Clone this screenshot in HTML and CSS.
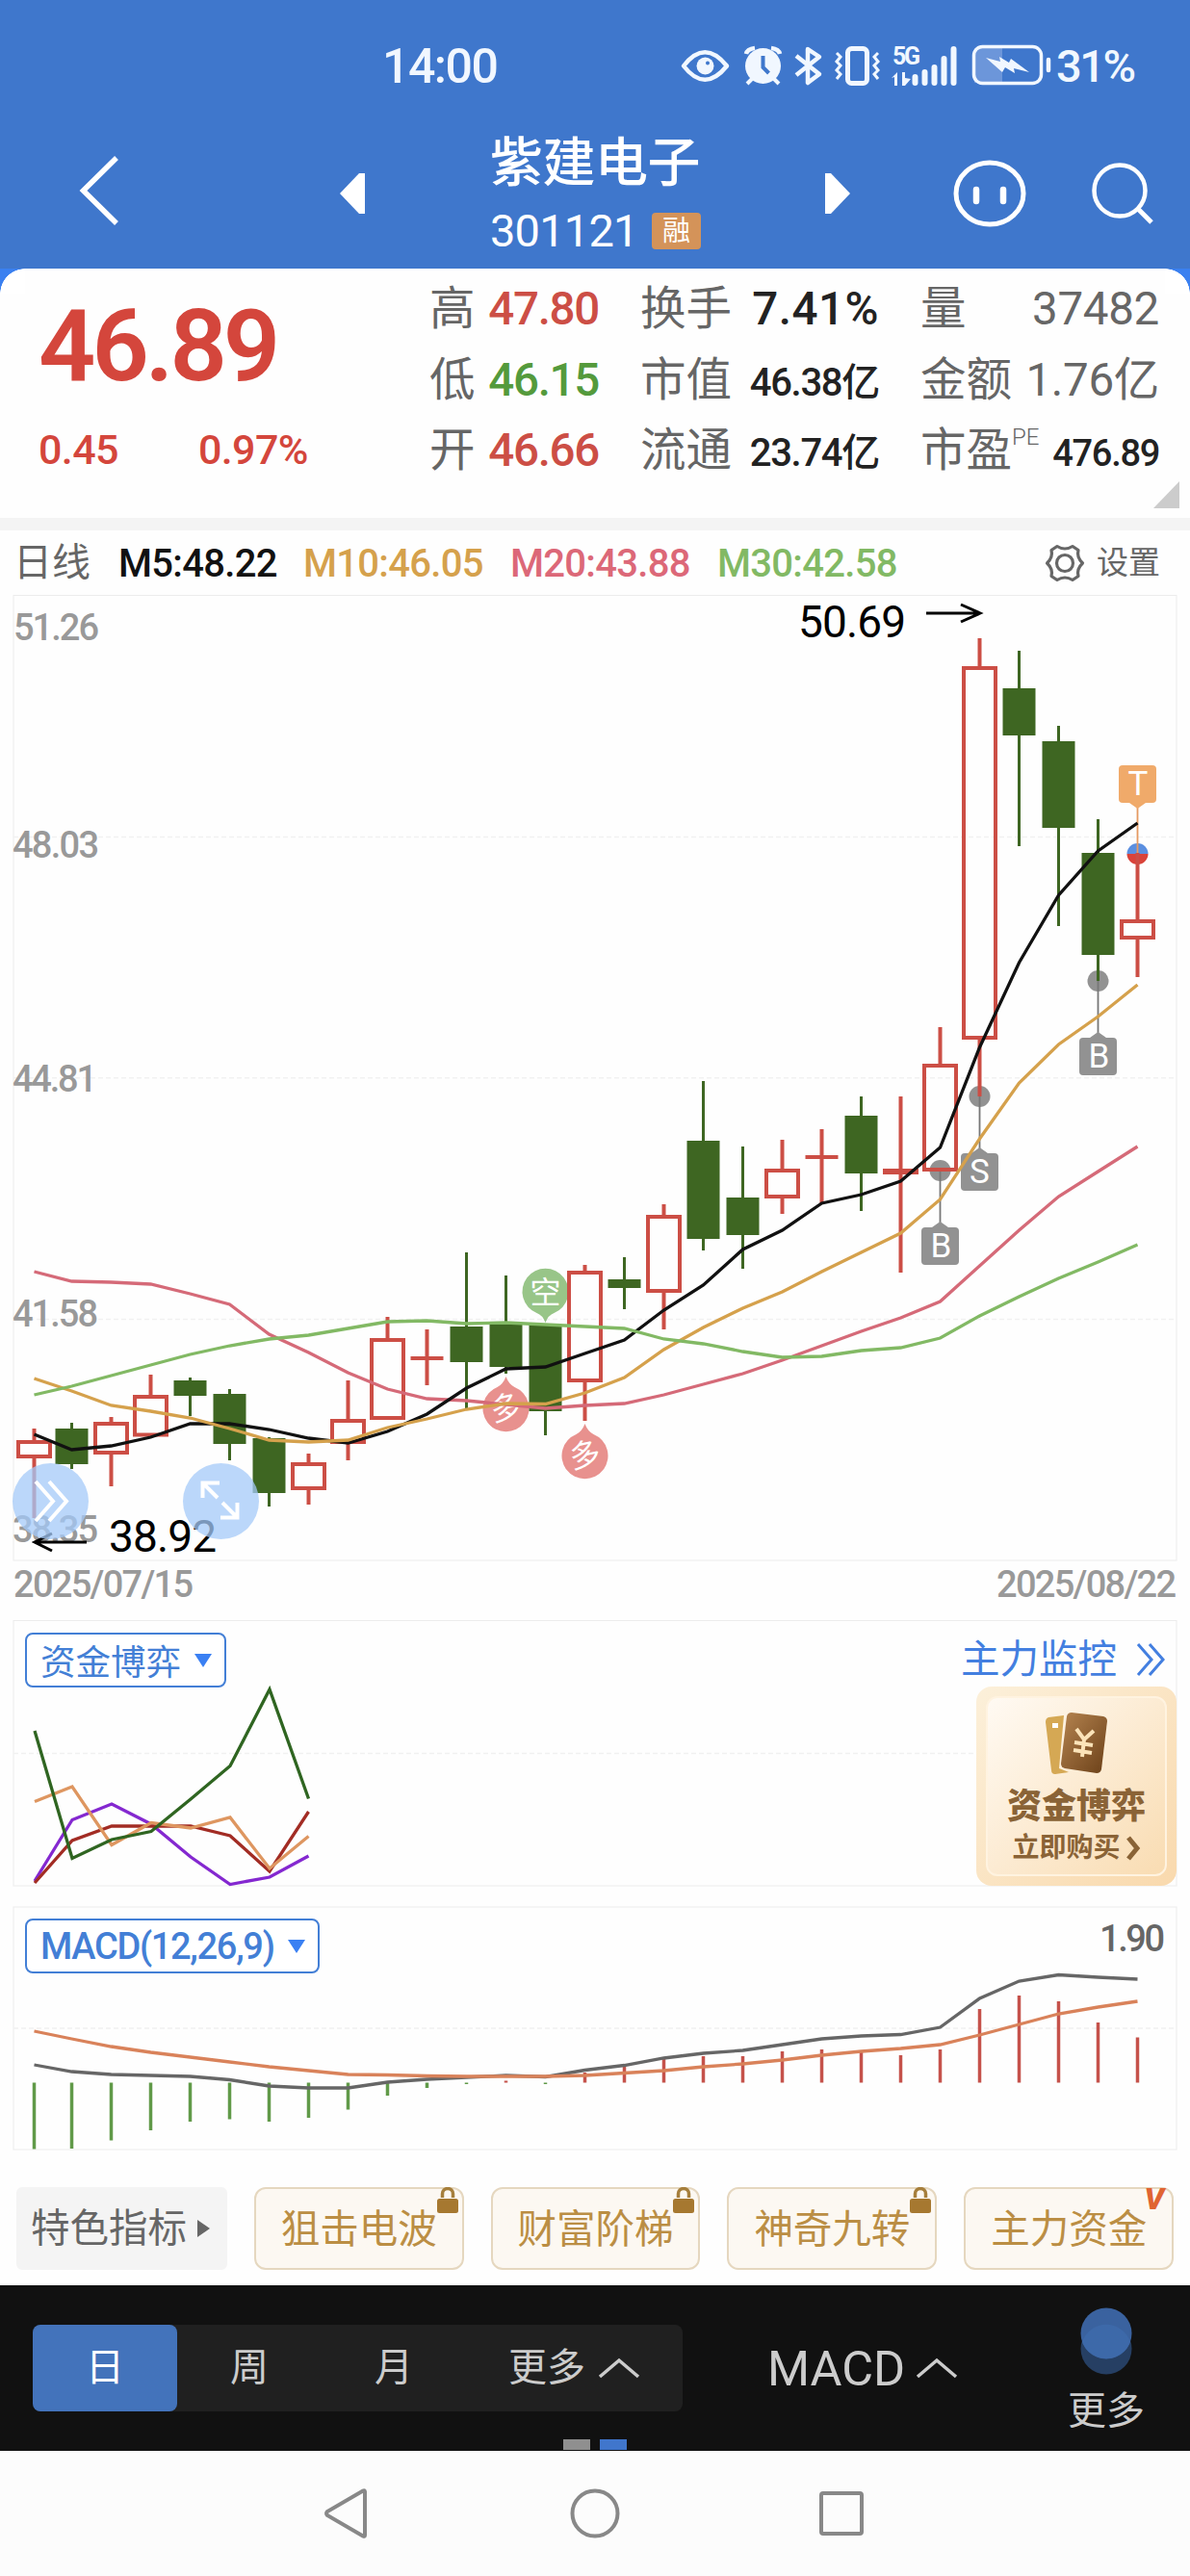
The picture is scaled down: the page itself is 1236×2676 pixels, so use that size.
FILE: index.html
```
<!DOCTYPE html>
<html lang="zh-CN">
<head>
    <meta charset="UTF-8">
    <meta name="viewport" content="width=device-width, initial-scale=1.0">
    <title>紫建电子 301121</title>
    <link rel="stylesheet" href="styles.css">
</head>
<body>
    <header class="header">
        <div class="status-bar">
            <span class="time">14:00</span>
            <svg class="status-icons" width="390" height="50" viewBox="702 42 390 50">
                <!-- глаз -->
                <path d="M710 68.500Q732 40 755 68.500Q732 97 710 68.500Z" fill="none" stroke="#f1f7ff" stroke-width="4.500" stroke-linejoin="round"/>
                <circle cx="732.500" cy="68.500" r="9" fill="#f1f7ff"/>
                <circle cx="735" cy="65.500" r="2" fill="#3f77cc"/>
                <!-- будильник -->
                <circle cx="792.500" cy="68.500" r="18.500" fill="#f1f7ff"/>
                <path d="M775 56Q776 51 784 50M810 56Q809 51 801 50" fill="none" stroke="#f1f7ff" stroke-width="4.500"/>
                <path d="M781 82l-5 5M804 82l5 5" stroke="#f1f7ff" stroke-width="4"/>
                <path d="M792.500 58v12l6 6" fill="none" stroke="#3f77cc" stroke-width="4"/>
                <!-- bluetooth -->
                <path d="M827 58l24 19-12 9V51l12 8-24 19" fill="none" stroke="#f1f7ff" stroke-width="4.500" stroke-linejoin="round"/>
                <!-- вибрация -->
                <rect x="880.500" y="50.500" width="20" height="36" rx="4" fill="none" stroke="#f1f7ff" stroke-width="5"/>
                <path d="M869 55l4 4-4 5 4 4-4 5 4 4-4 5M912 55l-4 4 4 5-4 4 4 5-4 4 4 5" fill="none" stroke="#f1f7ff" stroke-width="3"/>
                <!-- сеть -->
                <text x="927" y="67" class="net" textLength="29">5G</text>
                <path d="M926 81l6-6v14h-3v-9zM937 75h3v6l6 1-6 7h-3z" fill="#f1f7ff"/>
                <path d="M950.500 80v6M960.500 75v11M970.500 70v16M980.500 61v25M990.500 51v35" stroke="#f1f7ff" stroke-width="6" stroke-linecap="round"/>
                <!-- батарея -->
                <rect x="1012" y="50" width="29" height="36" fill="#6c96da"/>
                <rect x="1011.500" y="48.500" width="70" height="38" rx="9" fill="none" stroke="#f1f7ff" stroke-width="3.500"/>
                <path d="M1024 60l15 4-1-5 10 6 2-4 19 14-16-4 1 5-10-6-3 5z" fill="#f1f7ff"/>
                <path d="M1089 62v11" stroke="#f1f7ff" stroke-width="4.500" stroke-linecap="round"/>
            </svg>
            <span class="percent">31%</span>
        </div>
        <div class="nav">
            <svg class="back" width="46" height="76" viewBox="80 160 46 76"><path d="M121 164L86.500 198l34.500 34" fill="none" stroke="#fff" stroke-width="5.500"/></svg>
            <svg class="prev" width="26" height="42" viewBox="0 0 26 42"><path d="M26 0v42h-6L0 21 20 0z" fill="#fff"/></svg>
            <div class="stock">
                <div class="stock-name">紫建电子</div>
                <div class="stock-code"><span>301121</span><b class="margin-tag">融</b></div>
            </div>
            <svg class="next" width="26" height="42" viewBox="0 0 26 42"><path d="M0 0v42h6L26 21 6 0z" fill="#fff"/></svg>
            <svg class="robot" width="76" height="70" viewBox="0 0 76 70">
                <ellipse cx="38" cy="35" rx="35" ry="32" fill="none" stroke="#fff" stroke-width="5"/>
                <path d="M24 31v12M52 31v12" stroke="#fff" stroke-width="6.500" stroke-linecap="round"/>
            </svg>
            <svg class="search" width="66" height="66" viewBox="1134 168 66 66">
                <circle cx="1164" cy="198" r="26.500" fill="none" stroke="#fff" stroke-width="4.500"/>
                <path d="M1183 217l14 14" stroke="#fff" stroke-width="5"/>
            </svg>
        </div>
    </header>

    <section class="quote">
        <div class="price-block">
            <div class="price">46.89</div>
            <div class="change"><span>0.45</span><span>0.97%</span></div>
        </div>
        <div class="quote-grid">
            <div class="cell"><span>高</span><b class="red">47.80</b></div>
            <div class="cell"><span>换手</span><b class="wide">7.41%</b></div>
            <div class="cell"><span>量</span><b class="gray">37482</b></div>
            <div class="cell"><span>低</span><b class="green">46.15</b></div>
            <div class="cell"><span>市值</span><b class="small">46.38亿</b></div>
            <div class="cell"><span>金额</span><b class="gray">1.76亿</b></div>
            <div class="cell"><span>开</span><b class="red">46.66</b></div>
            <div class="cell"><span>流通</span><b class="small">23.74亿</b></div>
            <div class="cell"><span>市盈<sup>PE</sup></span><b class="smaller">476.89</b></div>
        </div>
        <div class="corner"></div>
    </section>

    <section class="ma-row">
        <span class="period">日线</span>
        <span class="ma ma5">M5:48.22</span>
        <span class="ma ma10">M10:46.05</span>
        <span class="ma ma20">M20:43.88</span>
        <span class="ma ma30">M30:42.58</span>
        <span class="settings">
            <svg width="42" height="42" viewBox="0 0 42 42" fill="none" stroke="#666" stroke-width="3.200" stroke-linejoin="round">
                <path d="M13 3.500Q21 8.500 29 3.500L35 7.500Q33 15 39.500 21Q33 27 35 34.500L29 38.500Q21 33.500 13 38.500L7 34.500Q9 27 2.500 21Q9 15 7 7.500Z"/>
                <circle cx="21" cy="21" r="8.500"/>
            </svg>
            设置
        </span>
    </section>

    <svg class="chart" width="1236" height="1053" viewBox="0 618 1236 1053">
        <rect class="frame" x="14" y="618.500" width="1208" height="1002.500"/>
        <path class="grid" d="M14 869.500H1222M14 1119.700H1222M14 1370.500H1222"/>

        <!-- сигналы 多 / 空 -->
        <g class="pin pin-long">
            <path d="M525.500 1430q3 8 9 11a24 24 0 1 1-18 0q6-3 9-11z"/>
            <text x="525.500" y="1474" transform="rotate(-12 525.500 1462)">多</text>
            <path d="M607.500 1479q3 8 9 11a24 24 0 1 1-18 0q6-3 9-11z"/>
            <text x="607.500" y="1523" transform="rotate(-12 607.500 1511)">多</text>
        </g>
        <g class="pin pin-short">
            <path d="M566.500 1374q-3-8-9-10a24 24 0 1 1 18 0q-6 2-9 10z"/>
            <text x="566.500" y="1354">空</text>
        </g>

        <!-- сделки B / S / T -->
        <g class="trade">
            <circle cx="1140.500" cy="1019" r="11"/>
            <circle cx="1017.500" cy="1139" r="11"/>
            <circle cx="976.500" cy="1216" r="11"/>
            <path class="stem" d="M1140.500 1019v56M1017.500 1139v56M976.500 1216v56"/>
            <path d="M1132 1078l8.500-6 8.500 6zM1009 1198l8.500-6 8.500 6zM968 1275l8.500-6 8.500 6z"/>
            <rect x="1121" y="1078" width="39" height="39" rx="4"/>
            <rect x="998" y="1198" width="39" height="39" rx="4"/>
            <rect x="957" y="1275" width="39" height="39" rx="4"/>
            <text x="1141.500" y="1109">B</text>
            <text x="1017.500" y="1229">S</text>
            <text x="977.500" y="1306">B</text>
        </g>
        <path d="M1170.500 887a11 11 0 0 1 22 0z" fill="#5b8fe0"/>
        <path d="M1170.500 887a11 11 0 0 0 22 0z" fill="#d9433a"/>

        <g id="candles"></g>

        <g class="trade trade-t">
            <path class="stem" d="M1181.500 836v50"/>
            <path d="M1173 834l8.500 6 8.500-6z"/>
            <rect x="1162" y="795" width="39" height="39" rx="4"/>
            <text x="1182" y="826">T</text>
        </g>

        <g id="averages"></g>

        <g class="axis">
            <text x="14" y="665" textLength="89">51.26</text>
            <text x="13" y="891" textLength="90">48.03</text>
            <text x="13" y="1134" textLength="88">44.81</text>
            <text x="13" y="1378" textLength="89">41.58</text>
            <text x="13" y="1602" textLength="89">38.35</text>
            <text x="14" y="1659" textLength="187">2025/07/15</text>
            <text x="1035" y="1659" textLength="187">2025/08/22</text>
        </g>
        <g class="extreme">
            <text x="829" y="662" textLength="112">50.69</text>
            <path d="M962 637h55M998 628l20 9-20 9"/>
            <text x="113" y="1611.500" textLength="112">38.92</text>
            <path d="M90 1602H36M54 1593l-18 9 18 9"/>
        </g>

        <g class="round-btn">
            <circle cx="52.500" cy="1559.500" r="39.500"/>
            <path d="M37 1539l18 20.500L37 1580M51 1539l18 20.500L51 1580"/>
            <circle cx="229.500" cy="1559.500" r="39.500"/>
            <path d="M228 1540.500h-17.500V1556M211 1541l15 15M229 1576.500h17.500V1561M246 1576l-15-15"/>
        </g>
    </svg>

    <section class="sub-chart">
        <svg class="chart" width="1236" height="300" viewBox="0 1671 1236 300">
            <rect class="frame" x="14" y="1683.500" width="1208" height="275.500"/>
            <path class="grid" d="M14 1821.500H1222"/>
            <g class="flow">
                <path stroke="#8428d0" d="M36 1954L75 1890.500 116 1874 157 1895 198 1929 239 1957.500 280 1950 320.500 1928"/>
                <path stroke="#a22c24" d="M36 1956L75 1912 116 1897H198L239 1907 280 1944 320.500 1882"/>
                <path stroke="#de9660" d="M36 1871.500L75 1856 116 1916.500 157 1893.500 198 1899 239 1888 280 1941 320.500 1907.500"/>
                <path stroke="#2f6521" d="M36 1798L75 1930.500 116 1911 157 1902.500 198 1869 239 1834.500 280 1755 320.500 1868.500"/>
            </g>
        </svg>
        <div class="indicator">资金博弈<i></i></div>
        <div class="monitor">
            主力监控
            <svg width="30" height="36" viewBox="0 0 30 36" fill="none" stroke="#437fe0" stroke-width="3"><path d="M2 2l14 16L2 34M14 2l14 16-14 16"/></svg>
        </div>
        <div class="buy-card">
            <svg width="66" height="66" viewBox="1085 1778 66 66">
                <defs>
                    <linearGradient id="brown" x1="0" y1="0" x2="1" y2="1">
                        <stop offset="0" stop-color="#b58450"/>
                        <stop offset="1" stop-color="#6b4018"/>
                    </linearGradient>
                </defs>
                <path d="M1089 1784l16-2-5 55 10 4-14 2q-4 0-4-4l-6-50q0-4 3-5z" fill="#d5a854"/>
                <rect x="1093" y="1790" width="6" height="5" fill="#fff"/>
                <path d="M1113 1779l33 4q4 1 4 5l-6 50q-1 4-5 4l-33-5q-4-1-4-5l6-49q1-4 5-4z" fill="url(#brown)"/>
                <path d="M1118 1796l8 11 10-9M1126 1807l-2 18M1116 1810l19 3M1115 1818l19 3" fill="none" stroke="#fbe3b9" stroke-width="4"/>
            </svg>
            <div class="buy-title">资金博弈</div>
            <div class="buy-link">立即购买<svg width="15" height="26" viewBox="0 0 15 26"><path d="M2 2l9 11-9 11" fill="none" stroke="#8a6336" stroke-width="5"/></svg></div>
        </div>
    </section>

    <section class="sub-chart">
        <svg class="chart" width="1236" height="279" viewBox="0 1971 1236 279">
            <rect class="frame" x="14" y="1981" width="1208" height="252"/>
            <path class="grid" d="M14 2107H1222"/>
            <g id="macd"></g>
            <text class="macd-max" x="1142" y="2027" textLength="68">1.90</text>
        </svg>
        <div class="indicator indicator-macd"><span>MACD(12,26,9)</span><i></i></div>
    </section>

    <section class="tags">
        <div class="tag tag-title">特色指标<i></i></div>
        <div class="tag">狙击电波<svg class="lock" width="22" height="27" viewBox="0 0 22 27"><path d="M5.500 11V7a5.500 5.500 0 0 1 11 0v4" fill="none" stroke="#a67f3c" stroke-width="3.500"/><rect y="12" width="22" height="15" rx="2.500" fill="#a67830"/></svg></div>
        <div class="tag">财富阶梯<svg class="lock" width="22" height="27" viewBox="0 0 22 27"><path d="M5.500 11V7a5.500 5.500 0 0 1 11 0v4" fill="none" stroke="#a67f3c" stroke-width="3.500"/><rect y="12" width="22" height="15" rx="2.500" fill="#a67830"/></svg></div>
        <div class="tag">神奇九转<svg class="lock" width="22" height="27" viewBox="0 0 22 27"><path d="M5.500 11V7a5.500 5.500 0 0 1 11 0v4" fill="none" stroke="#a67f3c" stroke-width="3.500"/><rect y="12" width="22" height="15" rx="2.500" fill="#a67830"/></svg></div>
        <div class="tag">主力资金<span class="vip">V</span></div>
    </section>

    <footer class="toolbar">
        <div class="periods">
            <span class="active">日</span>
            <span>周</span>
            <span>月</span>
            <span class="more">更多<svg width="44" height="24" viewBox="0 0 44 24"><path d="M2 21L22 4l20 17" fill="none" stroke="#ccc" stroke-width="3.500"/></svg></span>
        </div>
        <div class="macd-select">MACD<svg width="44" height="24" viewBox="0 0 44 24"><path d="M2 21L22 4l20 17" fill="none" stroke="#ccc" stroke-width="3.500"/></svg></div>
        <div class="extra">
            <svg width="54" height="70" viewBox="0 0 54 70">
                <circle cx="27" cy="43" r="26.500" fill="#263f63"/>
                <circle cx="27" cy="27" r="26.500" fill="#3a629f"/>
                <path d="M2 35.500A26.500 26.500 0 0 1 52 35.500A26.500 26.500 0 0 1 2 35.500z" fill="#3d69a9"/>
            </svg>
            更多
        </div>
        <div class="pages"><i></i><i class="on"></i></div>
    </footer>

    <div class="system-nav">
        <svg width="50" height="54" viewBox="0 0 50 54"><path d="M44 4.500v45q0 2-2 1L5 29q-2-2 0-4L42 3.500q2-1 2 1z"/></svg>
        <svg width="52" height="54" viewBox="0 0 52 54"><circle cx="26" cy="27" r="23.500"/></svg>
        <svg width="50" height="54" viewBox="0 0 50 54"><rect x="2" y="6" width="42" height="42" rx="2"/></svg>
    </div>

    <script>
        // high, верх тела, низ тела, low, тип (u - рост, d - падение, c - крест)
        const candles = [
            [1484, 1496, 1515, 1577, 'u'], [1478, 1484, 1521, 1526, 'd'], [1472, 1477, 1511, 1544, 'u'],
            [1428, 1449, 1492.5, 1492, 'u'], [1431, 1434, 1450, 1471, 'd'], [1443, 1448, 1500, 1517, 'd'],
            [1493, 1494, 1551, 1565, 'd'], [1510, 1519, 1548, 1563, 'u'], [1434, 1474, 1500, 1517, 'u'],
            [1368, 1390, 1475, 1475, 'u'], [1381, 1409, 1413, 1439, 'c'], [1301, 1378, 1415, 1463, 'd'],
            [1325, 1375, 1420, 1427, 'd'], [1375, 1376, 1466, 1491, 'd'], [1314, 1320, 1436, 1476, 'u'],
            [1306, 1329, 1338, 1360, 'd'], [1251, 1262, 1343, 1381, 'u'], [1123, 1185, 1287, 1299, 'd'],
            [1191, 1244, 1283, 1318, 'd'], [1184, 1214, 1245, 1261, 'u'], [1173, 1200, 1204, 1250, 'c'],
            [1139, 1159, 1219, 1258, 'd'], [1139, 1214, 1220, 1322, 'c'], [1067, 1105, 1217, 1217, 'u'],
            [663, 692, 1080, 1139, 'u'], [676, 715, 764, 879, 'd'], [754, 770, 860, 962, 'd'],
            [851, 886, 992, 1019, 'd'], [886, 955, 976, 1015, 'u']
        ];
        const averages = {
            '#d56a78': [1321, 1331, 1332, 1334, 1344, 1355, 1386, 1405, 1426, 1443, 1453, 1455, 1459, 1463, 1460, 1458, 1449, 1438, 1427, 1413, 1398, 1383, 1369, 1352, 1315, 1278, 1243, 1217, 1191],
            '#111111': [1490, 1506, 1502, 1493, 1479, 1479, 1485, 1494, 1499, 1487, 1469, 1442, 1422, 1420, 1406, 1392, 1361, 1335, 1298, 1278, 1250, 1241, 1227, 1192, 1088, 1000, 930, 884, 855],
            '#d5a14c': [1432, 1445, 1460, 1466, 1473, 1484, 1496, 1498, 1496, 1483, 1474, 1464, 1458, 1458.5, 1447, 1431, 1402, 1379, 1359, 1342, 1321, 1301, 1281, 1246, 1183, 1125, 1085, 1056, 1023],
            '#82b964': [1449, 1440, 1429, 1418, 1407, 1398, 1391, 1387, 1380, 1373, 1372, 1375, 1374, 1376, 1378, 1380, 1391, 1396, 1404, 1410, 1409, 1403, 1400, 1390, 1367, 1347, 1328, 1311, 1293]
        };
        const macdBars = [2232.5, 2232, 2223.5, 2213, 2204, 2201.5, 2204, 2200, 2191.5, 2177, 2169, 2165, 2161.5, 2165, 2153, 2147, 2139, 2136, 2136, 2131, 2129, 2132, 2135, 2129, 2087, 2073, 2079, 2101, 2116.5];
        const macdLines = {
            '#666666': [2145, 2152, 2155, 2156, 2157, 2160.5, 2167, 2169, 2169, 2163, 2160, 2158, 2156, 2157.5, 2150.5, 2145.5, 2138, 2133, 2130, 2124, 2118, 2115, 2113.5, 2106, 2076, 2058, 2051.5, 2054, 2056],
            '#d9825a': [2110, 2118, 2126, 2132, 2137, 2142, 2147, 2151, 2155, 2155.5, 2156.5, 2157, 2157, 2157, 2156, 2153.5, 2151, 2147, 2144, 2140, 2135, 2131, 2128, 2124, 2114, 2103, 2092, 2085, 2079]
        };

        function xAt(i) {
            return i === 0 ? 35.5 : 33.5 + i * 41;
        }

        function add(parent, name, attrs) {
            const el = document.createElementNS('http://www.w3.org/2000/svg', name);
            for (const key in attrs) {
                el.setAttribute(key, attrs[key]);
            }
            document.getElementById(parent).appendChild(el);
        }

        function drawLines(parent, lines) {
            for (const color in lines) {
                const points = lines[color].map((y, i) => xAt(i) + ',' + y).join(' ');
                add(parent, 'polyline', { points: points, fill: 'none', stroke: color, 'stroke-width': 3.3 });
            }
        }

        candles.forEach(([high, top, bottom, low, type], i) => {
            const x = xAt(i);
            if (type === 'u') {
                add('candles', 'path', { d: `M${x} ${high}V${top}M${x} ${bottom}V${Math.max(low, bottom)}`, stroke: '#cc4e45', 'stroke-width': 4 });
                add('candles', 'rect', { x: x - 16.5, y: top + 2, width: 33, height: bottom - top - 4, fill: 'none', stroke: '#cc4e45', 'stroke-width': 4 });
            } else {
                const color = type === 'd' ? '#3e6622' : '#cc4e45';
                const w = bottom - top === 6 ? 37 : 34;
                add('candles', 'path', { d: `M${x} ${high}V${low}`, stroke: color, 'stroke-width': type === 'd' ? 3 : 4 });
                add('candles', 'rect', { x: x - w / 2, y: top, width: w, height: bottom - top, fill: color });
            }
        });
        drawLines('averages', averages);

        macdBars.forEach((y, i) => {
            add('macd', 'path', { d: `M${xAt(i)} 2163.500V${y}`, stroke: y > 2163.5 ? '#619a49' : '#c5524b', 'stroke-width': 3.5 });
        });
        drawLines('macd', macdLines);
    </script>
</body>
</html>
```
FILE: styles.css
```
body {
    margin: 0;
    width: 1236px;
    background-color: #fefefe;
    font-family: Roboto, "Noto Sans CJK SC", sans-serif;
    color: #666;
}
svg {
    display: block;
    flex: none;
}
b {
    font-weight: 500;
}
.header {
    height: 279px;
    background-color: #3f77cc;
    color: #fff;
}
.status-bar {
    display: flex;
    align-items: center;
    height: 100px;
    padding-top: 37px;
    box-sizing: border-box;
    padding-left: 397px;
    color: #f1f7ff;
}
.time {
    width: 305px;
    font-size: 50px;
    line-height: 60px;
    font-weight: 500;
    letter-spacing: -1.5px;
    white-space: nowrap;
}
.status-icons {
    margin-top: -3px;
}
.net {
    font-size: 25px;
    font-weight: 700;
    fill: #f1f7ff;
}
.percent {
    margin-left: 5px;
    font-size: 47px;
    font-weight: 500;
    letter-spacing: -2.5px;
}
.nav {
    display: flex;
    height: 179px;
    padding-left: 80px;
}
.back {
    margin-top: 60px;
}
.prev {
    margin: 80px 0 0 227px;
}
.stock {
    width: 220px;
    margin: 39px 128px 0 130px;
}
.stock-name {
    font-size: 55px;
    font-weight: 500;
    line-height: 60px;
    letter-spacing: -0.5px;
    white-space: nowrap;
}
.stock-code {
    display: flex;
    justify-content: space-between;
    align-items: center;
    width: 219px;
    margin-top: 13px;
    font-size: 47px;
    line-height: 56px;
    letter-spacing: -0.8px;
}
.margin-tag {
    width: 51px;
    height: 38px;
    border-radius: 4px;
    background-color: #d49359;
    font-size: 29px;
    font-weight: 400;
    line-height: 38px;
    letter-spacing: 0;
    text-align: center;
}
.next {
    margin-top: 80px;
}
.robot {
    margin: 66px 0 0 107px;
}
.search {
    margin: 68px 0 0 67px;
}
.quote {
    position: relative;
    display: flex;
    height: 259px;
    border-bottom: 13px solid #f4f4f4;
    background: radial-gradient(circle at 26px 26px, #fff 25.500px, #3a80f0 26px) 0 0 / 26px 26px no-repeat, radial-gradient(circle at 0 26px, #fff 25.500px, #3a80f0 26px) 100% 0 / 26px 26px no-repeat, #fefefe;
}
.price-block {
    width: 406px;
    padding-left: 40px;
    color: #d4463c;
}
.price {
    margin-top: 21px;
    font-size: 104px;
    font-weight: 600;
    line-height: 120px;
    letter-spacing: -4px;
}
.change {
    display: flex;
    gap: 83px;
    margin-top: 19px;
    font-size: 43px;
    font-weight: 500;
    line-height: 56px;
    letter-spacing: -0.600px;
}
.quote-grid {
    display: grid;
    grid-template-columns: 176px 248px 248px;
    grid-auto-rows: 73.500px;
    gap: 0 43px;
    margin-top: 6px;
}
.cell {
    display: flex;
    justify-content: space-between;
    align-items: baseline;
    line-height: 73px;
    font-size: 47.500px;
    white-space: nowrap;
}
.cell b {
    color: #222;
    letter-spacing: -1.300px;
}
.cell .red {
    color: #cc4e45;
}
.cell .green {
    color: #549a3c;
}
.cell .wide {
    letter-spacing: 0.500px;
}
.cell .gray {
    color: #666;
    font-weight: 400;
    letter-spacing: -0.300px;
}
.cell .small {
    font-size: 40px;
}
.cell .smaller {
    font-size: 38px;
}
.cell sup {
    font-size: 24px;
    line-height: 0;
    vertical-align: 22px;
    font-weight: 300;
}
.corner {
    position: absolute;
    right: 11px;
    bottom: 10px;
    border-left: 27px solid transparent;
    border-bottom: 28px solid #ccc;
}
.ma-row {
    display: flex;
    align-items: center;
    height: 67px;
    padding-left: 14px;
    line-height: 67px;
    font-size: 40px;
    white-space: nowrap;
}
.period {
    width: 109px;
}
.ma {
    font-weight: 500;
    letter-spacing: -0.700px;
    padding-top: 2px;
}
.ma5 {
    width: 192px;
    color: #111;
}
.ma10 {
    width: 215px;
    color: #d5a14c;
}
.ma20 {
    width: 215px;
    color: #dc6878;
}
.ma30 {
    width: 340px;
    color: #82b964;
}
.settings {
    display: flex;
    align-items: center;
    gap: 12px;
    font-size: 33px;
}
.frame {
    fill: none;
    stroke: #ececec;
    stroke-width: 1;
}
.grid {
    fill: none;
    stroke: #f1f1f1;
    stroke-width: 1.5;
    stroke-dasharray: 5 3;
}
.axis text, .macd-max {
    font-size: 38px;
    font-weight: 500;
    fill: #999;
}
.macd-max {
    fill: #666;
}
.extreme text {
    font-size: 46px;
    fill: #000;
}
.extreme path {
    fill: none;
    stroke: #000;
    stroke-width: 3;
}
.pin text {
    font-size: 32px;
    text-anchor: middle;
    fill: #fff;
}
.pin-long {
    fill: #e8918e;
}
.pin-short {
    fill: #98c588;
}
.trade {
    fill: #929292;
}
.trade text {
    font-size: 35px;
    text-anchor: middle;
    fill: #fff;
}
.trade .stem {
    stroke: #777;
    stroke-width: 1.8;
}
.trade-t {
    fill: #f0aa6a;
}
.trade-t .stem {
    stroke: #e59a62;
}
.round-btn circle {
    fill: #a4c9f8;
    fill-opacity: 0.75;
}
.round-btn path {
    fill: none;
    stroke: #fff;
    stroke-width: 4;
}
.flow path {
    fill: none;
    stroke-width: 3.3;
}
.sub-chart {
    position: relative;
}
.indicator {
    position: absolute;
    left: 26px;
    top: 25px;
    display: flex;
    align-items: center;
    gap: 14px;
    height: 53px;
    padding: 0 13px 0 14px;
    border: 2px solid #437fd6;
    border-radius: 8px;
    color: #437fd6;
    font-size: 36.500px;
    background-color: #fff;
}
.indicator i {
    border: 9px solid transparent;
    border-top: 14px solid #3a80f3;
    border-bottom: 0;
}
.indicator-macd {
    top: 22px;
    font-size: 38px;
    font-weight: 500;
}
.indicator-macd span {
    width: 243px;
    letter-spacing: -1.300px;
    white-space: nowrap;
}
.monitor {
    position: absolute;
    right: 26px;
    top: 23px;
    display: flex;
    align-items: center;
    gap: 20px;
    color: #437fe0;
    font-size: 40.500px;
    line-height: 60px;
}
.buy-card {
    position: absolute;
    left: 1014px;
    top: 81px;
    width: 208px;
    height: 207px;
    border-radius: 16px;
    background: linear-gradient(135deg, #fcf0da, #f9d9ad);
    color: #8a6336;
    display: flex;
    flex-direction: column;
    align-items: center;
}
.buy-card::before {
    content: "";
    position: absolute;
    inset: 10px;
    border: 2px solid #fff3e0;
    border-radius: 12px;
    background: linear-gradient(135deg, #fffaf3, #f9dcb2);
}
.buy-card > * {
    position: relative;
}
.buy-card > svg {
    margin-top: 26px;
}
.buy-title {
    margin-top: 10px;
    font-size: 36px;
    font-weight: 900;
    line-height: 46px;
}
.buy-link {
    display: flex;
    align-items: center;
    gap: 6px;
    margin-top: 3px;
    font-size: 28px;
    font-weight: 700;
    line-height: 34px;
}
.tags {
    display: flex;
    gap: 28px;
    height: 102px;
    padding: 22px 17px 0;
}
.tag {
    position: relative;
    box-sizing: border-box;
    width: 218px;
    height: 86px;
    padding-left: 26px;
    border: 2px solid #e5d7bf;
    border-radius: 12px;
    background-color: #fcf8f2;
    color: #bb8e44;
    font-size: 40.500px;
    line-height: 85px;
    white-space: nowrap;
}
.tag-title {
    display: flex;
    align-items: center;
    gap: 11px;
    width: 219px;
    padding-left: 13px;
    border-color: #f4f4f4;
    border-radius: 6px;
    background-color: #f4f4f4;
    color: #666;
}
.tag-title i {
    border: 9px solid transparent;
    border-left: 13px solid #666;
    border-right: 0;
}
.lock {
    position: absolute;
    right: 4px;
    top: -2px;
}
.vip {
    position: absolute;
    right: 8px;
    top: -2px;
    color: #e06432;
    font-size: 32px;
    font-weight: 900;
    font-style: italic;
    line-height: 25px;
}
.toolbar {
    position: relative;
    display: flex;
    height: 172px;
    padding-left: 34px;
    background-color: #111;
    color: #ccc;
    font-size: 40px;
    white-space: nowrap;
}
.periods {
    display: flex;
    width: 675px;
    height: 90px;
    margin-top: 41px;
    border-radius: 8px;
    background-color: #202020;
    line-height: 90px;
}
.periods span {
    width: 150px;
    text-align: center;
}
.periods .active {
    border-radius: 8px;
    background-color: #4373bb;
    color: #fff;
}
.periods .more {
    display: flex;
    align-items: center;
    width: 178px;
    gap: 13px;
    padding-left: 44px;
}
.macd-select {
    display: flex;
    align-items: center;
    gap: 11px;
    height: 90px;
    margin: 41px 0 0 88px;
    font-size: 50.500px;
}
.extra {
    display: flex;
    flex-direction: column;
    align-items: center;
    position: absolute;
    right: 47px;
    top: 23px;
    line-height: 76px;
}
.pages {
    position: absolute;
    left: 585px;
    bottom: 1px;
    display: flex;
    gap: 10px;
}
.pages i {
    width: 28px;
    height: 11px;
    background-color: #8f8f8f;
}
.pages .on {
    background-color: #4076cc;
}
.system-nav {
    display: flex;
    justify-content: center;
    align-items: center;
    gap: 207px;
    height: 130px;
    background-color: #fcfcfc;
}
.system-nav path, .system-nav circle, .system-nav rect {
    fill: none;
    stroke: #888;
    stroke-width: 4;
}
```
